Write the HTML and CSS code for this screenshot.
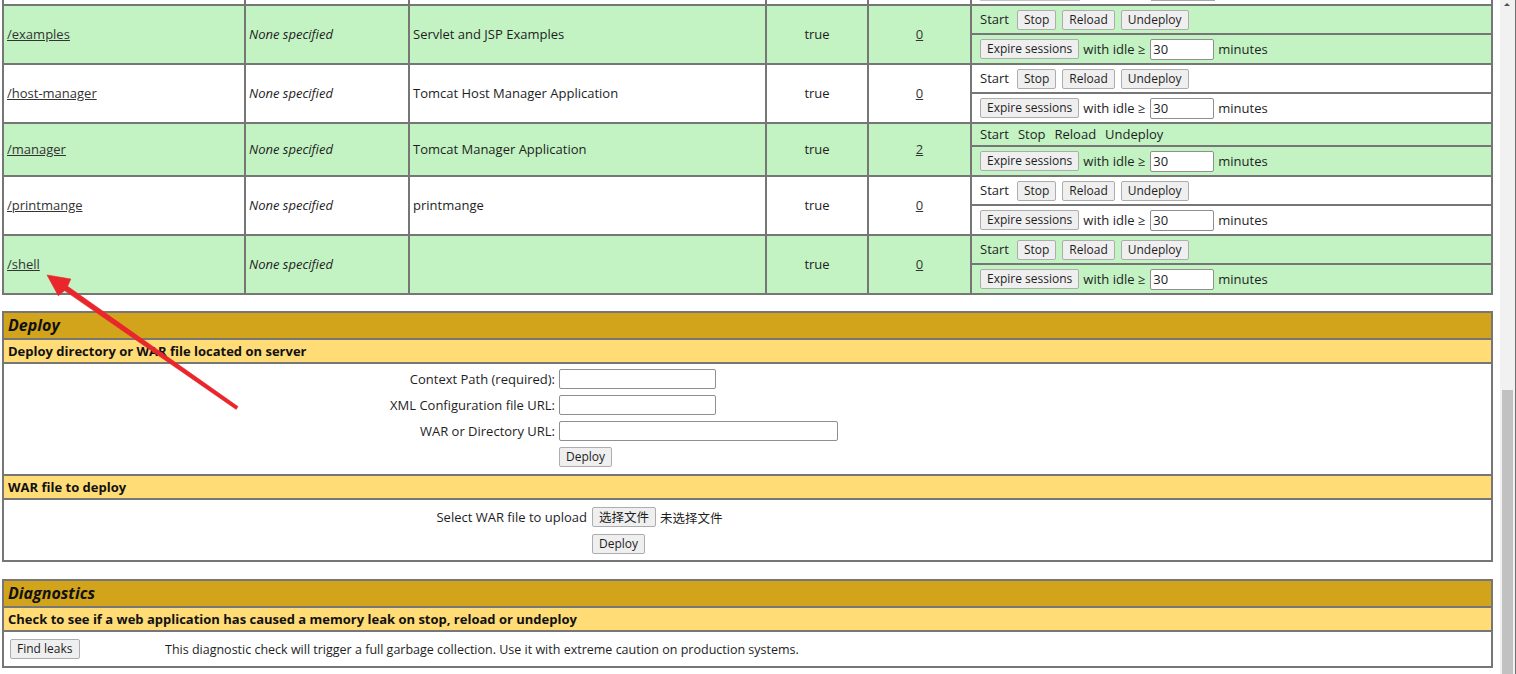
FILE: index.html
```html
<!DOCTYPE html>
<html lang="en">
<head>
<meta charset="utf-8">
<title>Tomcat Web Application Manager</title>
<link rel="stylesheet" href="styles.css">
</head>
<body>
<div class="page">
  <table class="grid apps">
    <tbody>
      <tr class="row-white stub">
        <td class="w-path"><div class="stub-fill"></div></td>
        <td class="w-ver"><div class="stub-fill"></div></td>
        <td class="w-name"><div class="stub-fill"></div></td>
        <td class="w-run"><div class="stub-fill"></div></td>
        <td class="w-sess"><div class="stub-fill"></div></td>
        <td class="w-cmd"><div class="stub-fill stub-cmd"><span class="stub-btn"></span><span class="stub-input"></span></div></td>
      </tr>

      <tr class="row-green">
        <td rowspan="2" class="left"><a href="#">/examples</a></td>
        <td rowspan="2" class="left"><i>None specified</i></td>
        <td rowspan="2" class="left">Servlet and JSP Examples</td>
        <td rowspan="2" class="center">true</td>
        <td rowspan="2" class="center"><a href="#">0</a></td>
        <td class="cmd"><div class="cmd-line top"><span class="cmd-text">Start</span><button class="btn">Stop</button><button class="btn">Reload</button><button class="btn">Undeploy</button></div></td>
      </tr>
      <tr class="row-green">
        <td class="cmd"><div class="cmd-line bottom"><button class="btn">Expire sessions</button><span>with idle ≥</span><input class="idle" type="text" value="30"><span>minutes</span></div></td>
      </tr>

      <tr class="row-white">
        <td rowspan="2" class="left"><a href="#">/host-manager</a></td>
        <td rowspan="2" class="left"><i>None specified</i></td>
        <td rowspan="2" class="left">Tomcat Host Manager Application</td>
        <td rowspan="2" class="center">true</td>
        <td rowspan="2" class="center"><a href="#">0</a></td>
        <td class="cmd"><div class="cmd-line top"><span class="cmd-text">Start</span><button class="btn">Stop</button><button class="btn">Reload</button><button class="btn">Undeploy</button></div></td>
      </tr>
      <tr class="row-white">
        <td class="cmd"><div class="cmd-line bottom"><button class="btn">Expire sessions</button><span>with idle ≥</span><input class="idle" type="text" value="30"><span>minutes</span></div></td>
      </tr>

      <tr class="row-green">
        <td rowspan="2" class="left"><a href="#">/manager</a></td>
        <td rowspan="2" class="left"><i>None specified</i></td>
        <td rowspan="2" class="left">Tomcat Manager Application</td>
        <td rowspan="2" class="center">true</td>
        <td rowspan="2" class="center"><a href="#">2</a></td>
        <td class="cmd"><div class="cmd-line plain"><span>Start</span><span>Stop</span><span>Reload</span><span>Undeploy</span></div></td>
      </tr>
      <tr class="row-green">
        <td class="cmd"><div class="cmd-line bottom"><button class="btn">Expire sessions</button><span>with idle ≥</span><input class="idle" type="text" value="30"><span>minutes</span></div></td>
      </tr>

      <tr class="row-white">
        <td rowspan="2" class="left"><a href="#">/printmange</a></td>
        <td rowspan="2" class="left"><i>None specified</i></td>
        <td rowspan="2" class="left">printmange</td>
        <td rowspan="2" class="center">true</td>
        <td rowspan="2" class="center"><a href="#">0</a></td>
        <td class="cmd"><div class="cmd-line top"><span class="cmd-text">Start</span><button class="btn">Stop</button><button class="btn">Reload</button><button class="btn">Undeploy</button></div></td>
      </tr>
      <tr class="row-white">
        <td class="cmd"><div class="cmd-line bottom"><button class="btn">Expire sessions</button><span>with idle ≥</span><input class="idle" type="text" value="30"><span>minutes</span></div></td>
      </tr>

      <tr class="row-green">
        <td rowspan="2" class="left"><a href="#">/shell</a></td>
        <td rowspan="2" class="left"><i>None specified</i></td>
        <td rowspan="2" class="left"></td>
        <td rowspan="2" class="center">true</td>
        <td rowspan="2" class="center"><a href="#">0</a></td>
        <td class="cmd"><div class="cmd-line top"><span class="cmd-text">Start</span><button class="btn">Stop</button><button class="btn">Reload</button><button class="btn">Undeploy</button></div></td>
      </tr>
      <tr class="row-green">
        <td class="cmd"><div class="cmd-line bottom"><button class="btn">Expire sessions</button><span>with idle ≥</span><input class="idle" type="text" value="30"><span>minutes</span></div></td>
      </tr>
    </tbody>
  </table>

  <section class="panel deploy">
    <div class="cell title">Deploy</div>
    <div class="cell header">Deploy directory or WAR file located on server</div>
    <div class="cell body">
      <form class="form-grid server">
        <label class="lbl">Context Path (required):</label>
        <input class="field short" type="text">
        <label class="lbl">XML Configuration file URL:</label>
        <input class="field short" type="text">
        <label class="lbl">WAR or Directory URL:</label>
        <input class="field long" type="text">
        <span class="lbl"></span>
        <div><button class="btn" type="button">Deploy</button></div>
      </form>
    </div>
    <div class="cell header">WAR file to deploy</div>
    <div class="cell body">
      <form class="form-grid upload">
        <label class="lbl">Select WAR file to upload</label>
        <div class="file-pick"><button class="btn cjk" type="button">选择文件</button><span class="cjk-text">未选择文件</span></div>
        <span class="lbl"></span>
        <div><button class="btn" type="button">Deploy</button></div>
      </form>
    </div>
  </section>

  <section class="panel diag">
    <div class="cell title">Diagnostics</div>
    <div class="cell header">Check to see if a web application has caused a memory leak on stop, reload or undeploy</div>
    <div class="cell body">
      <div class="diag-row">
        <div><button class="btn" type="button">Find leaks</button></div>
        <div class="diag-text">This diagnostic check will trigger a full garbage collection. Use it with extreme caution on production systems.</div>
      </div>
    </div>
  </section>
</div>

<svg class="annot-arrow" width="1516" height="674" viewBox="0 0 1516 674" aria-hidden="true">
  <polygon points="47,275 70.8,279 67.6,286.3 238,406.6 236.2,409.4 64.6,290.6 58.3,295.8" fill="#e8262b" stroke="#e8262b" stroke-width="0.6" stroke-linejoin="round"/>
</svg>

<div class="scrollbar" aria-hidden="true">
  <div class="sb-arrow"></div>
  <div class="sb-thumb"></div>
</div>
</body>
</html>
```

FILE: styles.css
```css
html, body {
  margin: 0;
  padding: 0;
  height: 100%;
  overflow: hidden;
  background: #ffffff;
}

body {
  font-family: "Open Sans", "Liberation Sans", "Noto Sans CJK SC", sans-serif;
  font-size: 13px;
  color: #1e1e1e;
  position: relative;
}

.page {
  padding-left: 2px;
  width: 1491px;
}

a {
  color: #333333;
  text-decoration: underline;
}

/* ---------- applications table ---------- */
table.grid {
  width: 1491px;
  table-layout: fixed;
  border-collapse: separate;
  border-spacing: 0;
  border: 1px solid #767676;
}

.apps {
  margin-top: -2px;
}

table.grid td {
  border: 1px solid #767676;
  padding: 3px;
  box-sizing: border-box;
  line-height: 17px;
  vertical-align: middle;
}

table.grid tr.stub td {
  padding: 0;
  line-height: 0;
}

.stub-fill {
  height: 4px;
}

.stub-cmd {
  display: flex;
  align-items: flex-start;
}

.stub-btn {
  display: block;
  width: 100px;
  height: 1px;
  margin-left: 8px;
  background: #c4c4c4;
}

.stub-input {
  display: block;
  width: 64px;
  height: 1px;
  margin-left: 71px;
  background: #a8a8a8;
}

.w-path { width: 242px; }
.w-ver  { width: 164px; }
.w-name { width: 357px; }
.w-run  { width: 102px; }
.w-sess { width: 103px; }
.w-cmd  { width: 521px; }

.row-green td { background: #c3f3c3; }
.row-white td { background: #ffffff; }

td.left { text-align: left; }
td.center { text-align: center; }

.cmd-line {
  display: flex;
  align-items: center;
  white-space: nowrap;
}

.cmd-line.top {
  height: 21px;
  gap: 6px;
  padding-left: 5px;
}

.cmd-line.top .cmd-text {
  margin-right: 2px;
}

.cmd-line.plain {
  height: 15px;
  gap: 9px;
  padding-left: 5px;
}

.cmd-line.bottom {
  height: 22px;
  gap: 4px;
  padding-left: 5px;
}

.btn {
  font-family: "Open Sans", "Liberation Sans", sans-serif;
  font-size: 12px;
  color: #1e1e1e;
  height: 20px;
  box-sizing: border-box;
  padding: 0 6px;
  line-height: 18px;
  background: #efefef;
  border: 1px solid #adadad;
  border-radius: 2px;
  margin: 0;
}

.btn.cjk {
  font-family: "Noto Sans CJK SC", sans-serif;
  font-size: 12.5px;
  padding: 0 6px;
}

.idle {
  width: 64px;
  height: 21px;
  box-sizing: border-box;
  border: 1px solid #8f8f8f;
  border-radius: 2px;
  padding: 1px 2px;
  font-family: "Open Sans", "Liberation Sans", sans-serif;
  font-size: 13px;
  color: #1e1e1e;
  background: #ffffff;
  margin: 0 0 0 1px;
}

/* ---------- panels ---------- */
.panel {
  width: 1491px;
  box-sizing: border-box;
  border: 1px solid #767676;
}

.deploy { margin-top: 16px; }
.diag { margin-top: 17px; }

.cell {
  border: 1px solid #767676;
  padding: 3px;
}

.cell.title {
  background: #d2a41c;
  font-size: 16px;
  font-weight: bold;
  font-style: italic;
  line-height: 19px;
  padding-left: 4px;
  color: #111111;
}

.cell.header {
  background: #ffdc75;
  font-weight: bold;
  line-height: 16px;
  padding-left: 4px;
  color: #111111;
}

.cell.body {
  background: #ffffff;
}

.form-grid {
  display: grid;
  align-items: center;
  margin: 0;
}

.form-grid.server {
  grid-template-columns: 548px auto;
  column-gap: 4px;
  row-gap: 6px;
  padding: 2px 0 4px;
}

.form-grid.upload {
  grid-template-columns: 580px auto;
  column-gap: 5px;
  row-gap: 7px;
  padding: 4px 0 3px;
}

.lbl {
  text-align: right;
  white-space: nowrap;
}

.field {
  height: 20px;
  box-sizing: border-box;
  border: 1px solid #8f8f8f;
  border-radius: 2px;
  background: #ffffff;
  margin: 0;
  padding: 1px 2px;
}

.field.short { width: 157px; }
.field.long { width: 279px; }

.file-pick {
  display: flex;
  align-items: center;
  gap: 4px;
}

.cjk-text {
  font-family: "Noto Sans CJK SC", sans-serif;
  font-size: 12.5px;
}

.diag-row {
  display: grid;
  grid-template-columns: 155px auto;
  align-items: center;
  padding: 4px 0 4px 3px;
}

.diag-text {
  font-size: 12.5px;
}

/* ---------- annotation arrow ---------- */
.annot-arrow {
  position: absolute;
  left: 0;
  top: 0;
  pointer-events: none;
}

/* ---------- browser scrollbar ---------- */
.scrollbar {
  position: fixed;
  top: 0;
  right: 0;
  width: 16px;
  height: 100%;
  background: #f1f1f1;
  border-right: 1px solid #707070;
  box-sizing: border-box;
}

.sb-arrow {
  position: absolute;
  left: 4px;
  top: 3px;
  width: 0;
  height: 0;
  border-left: 3.5px solid transparent;
  border-right: 3.5px solid transparent;
  border-bottom: 3.5px solid #505050;
}

.sb-thumb {
  position: absolute;
  left: 2px;
  width: 11px;
  top: 390px;
  bottom: 0;
  background: #c1c1c1;
}
```
